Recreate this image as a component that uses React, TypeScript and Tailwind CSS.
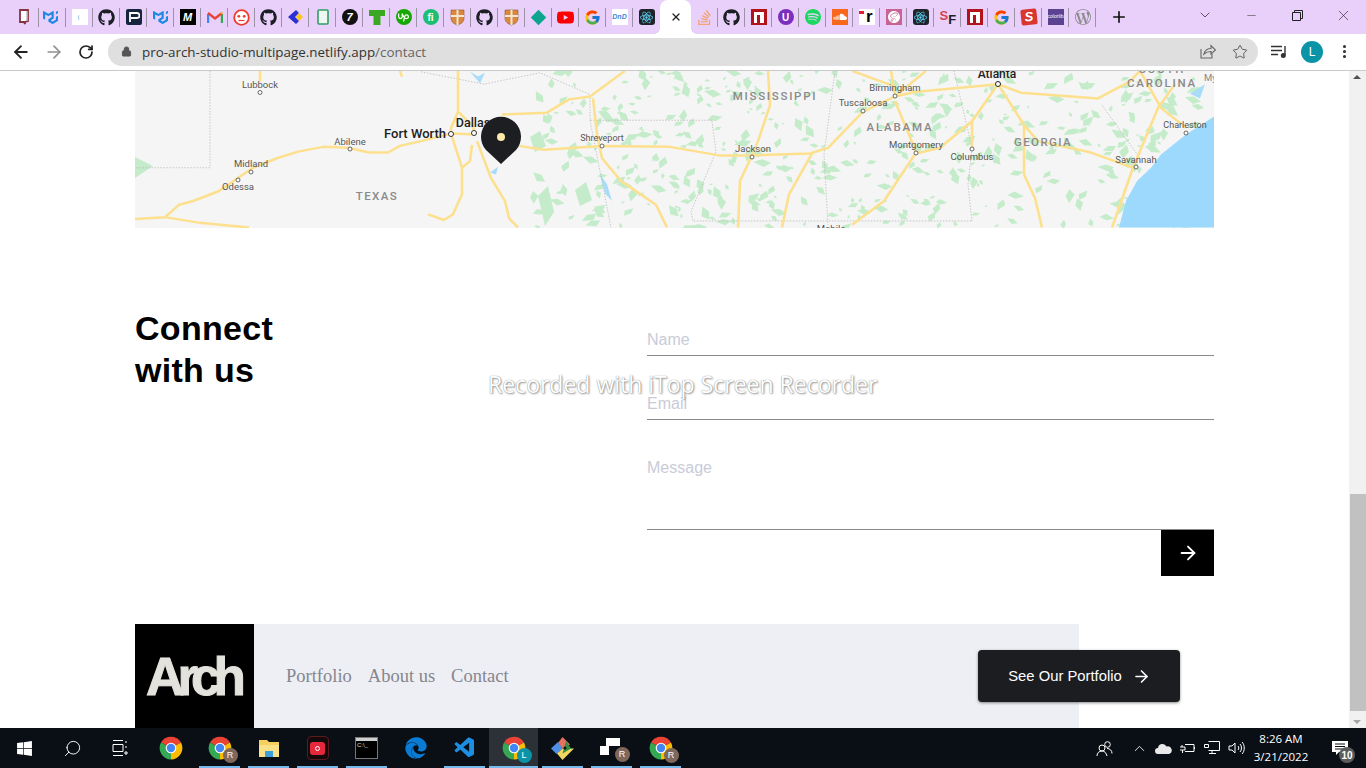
import type { ReactNode } from 'react';
import { ArrowLeft, ArrowRight, ChevronDown, ChevronUp, EllipsisVertical, Lock, Minus, Plus, RotateCw, Search, Star, X } from 'lucide-react';
import { FaEdge, FaGithub, FaWindows } from 'react-icons/fa';
import { FcGoogle } from 'react-icons/fc';
import { SiMui, SiReact, SiSass, SiSoundcloud, SiSpotify, SiStackoverflow, SiUpwork, SiWordpress, SiYoutube } from 'react-icons/si';
import { VscVscode } from 'react-icons/vsc';

const SANS = "font-['Liberation_Sans',Arial,sans-serif]";

const Github = () => <FaGithub className="text-[#1b1f23]" size={17} />;
const Mui = () => <SiMui className="text-[#1e88e5]" size={15} />;
const Google = () => <FcGoogle size={17} />;
const ReactDark = () => (
  <span className="flex h-4 w-4 items-center justify-center rounded-[3px] bg-[#20232a]">
    <SiReact className="text-[#61dafb]" size={13} />
  </span>
);
const Npm = () => (
  <span className="flex h-4 w-4 items-end justify-center bg-[#b3131b] pb-[2px]">
    <span className="flex h-[11px] w-[10px] justify-center bg-white">
      <span className="mt-[3px] h-2 w-[3px] bg-[#b3131b]" />
    </span>
  </span>
);
const Shield = () => (
  <svg width="15" height="17" viewBox="0 0 15 17">
    <path d="M1 1h13v8c0 4-3 6-6.500 7C4 15 1 13 1 9z" fill="#d9883d" stroke="#8d5a2b" strokeWidth="0.6" />
    <path d="M7.500 1v15M1 7h13" stroke="#f4e6d4" strokeWidth="2" />
  </svg>
);

const FAVICONS: ReactNode[] = [
  <svg key="a" className="-translate-x-[2px]" width="12" height="16" viewBox="0 0 12 16"><path d="M2 1h8v11l-3 1v2l-1-2H2z" fill="#fff" stroke="#84343f" strokeWidth="1.800" /><path d="M9 2v10" stroke="#b9b9c0" strokeWidth="1.500" /></svg>,
  <span key="b" className="flex -translate-x-[2px]"><Mui /></span>,
  <span key="c" className="flex h-4 w-4 items-center justify-center bg-white"><span className="h-[5px] w-[4px] rounded-full border-l border-[#9cc4e4]" /></span>,
  <Github key="d" />,
  <span key="e" className="flex h-4 w-4 items-center justify-center rounded-[2px] bg-[#14253d]">
    <svg width="12" height="12" viewBox="0 0 12 12"><path d="M2 11V2h7a2 2 0 0 1 0 5H3" fill="none" stroke="#fff" strokeWidth="1.800" /></svg>
  </span>,
  <Mui key="f" />,
  <span key="g" className={`flex h-4 w-4 items-center justify-center bg-black text-[11px] font-bold italic text-white ${SANS}`}>M</span>,
  <svg key="h" width="16" height="13" viewBox="0 0 16 13">
    <path d="M1 12V3" stroke="#4285f4" strokeWidth="2.400" />
    <path d="M15 12V3" stroke="#34a853" strokeWidth="2.400" />
    <path d="M1 2l7 5.500L15 2" fill="none" stroke="#ea4335" strokeWidth="2.400" />
    <path d="M14 1.500l1 1" stroke="#fbbc04" strokeWidth="2.400" />
  </svg>,
  <svg key="i" width="17" height="17" viewBox="0 0 17 17"><circle cx="8.500" cy="8.500" r="7.300" fill="#fff" stroke="#ee3b2f" strokeWidth="1.800" /><circle cx="5.800" cy="7.300" r="1.400" fill="#ee3b2f" /><circle cx="11.200" cy="7.300" r="1.400" fill="#ee3b2f" /><path d="M5.500 11.500h6" stroke="#ee3b2f" strokeWidth="1.200" /></svg>,
  <Github key="j" />,
  <svg key="k" width="17" height="16" viewBox="0 0 17 16"><path d="M9 1L1 8l8 7 3-3-4-4 4-4z" fill="#2b2fd6" /><path d="M12 4l4 4-4 4-3-4z" fill="#f6c71e" /></svg>,
  <svg key="l" width="12" height="16" viewBox="0 0 12 16"><rect x="1" y="1" width="10" height="14" rx="1" fill="#eef8f1" stroke="#2f9e62" strokeWidth="1.600" /></svg>,
  <span key="m" className={`flex h-4 w-4 items-center justify-center rounded-full bg-[#111] text-[11px] font-bold italic text-white ${SANS}`}>7</span>,
  <svg key="n" width="16" height="15" viewBox="0 0 16 15"><path d="M0 0h16v6h-4.500v9h-7V6H0z" fill="#3aa822" /></svg>,
  <span key="o" className="flex h-4 w-4 items-center justify-center rounded-full bg-[#14a800]"><SiUpwork className="text-white" size={11} /></span>,
  <span key="p" className={`flex h-4 w-4 items-center justify-center rounded-full bg-[#1dbf73] text-[10px] font-bold text-white ${SANS}`}>fi</span>,
  <Shield key="q" />,
  <Github key="r" />,
  <Shield key="s" />,
  <span key="t" className="h-[11px] w-[11px] rotate-45 bg-[#0ea58f]" />,
  <SiYoutube key="u" className="text-[#f00]" size={17} />,
  <Google key="v" />,
  <span key="w" className={`flex h-4 w-4 items-center justify-center bg-white text-[7px] font-bold italic text-[#3f86d6] ${SANS}`}>DnD</span>,
  <ReactDark key="x" />,
  null,
  <SiStackoverflow key="y" className="text-[#f2a47a]" size={15} />,
  <Github key="z" />,
  <Npm key="aa" />,
  <span key="ab" className={`flex h-4 w-4 items-center justify-center rounded-full bg-[#7b2fbf] text-[10px] font-bold text-white ${SANS}`}>U</span>,
  <SiSpotify key="ac" className="text-[#1ed760]" size={16} />,
  <span key="ad" className="flex h-4 w-4 items-center justify-center bg-[#f9671d]"><SiSoundcloud className="text-white" size={14} /></span>,
  <span key="ae" className={`relative flex h-4 w-4 justify-end bg-white pr-[2px] text-[17px] font-bold leading-[16px] text-black ${SANS}`}>r<span className="absolute left-0 top-[2px] h-[3px] w-[5px] bg-[#e2202c]" /></span>,
  <span key="af" className="flex h-4 w-4 items-center justify-center bg-[#c76494]"><SiSass className="text-white" size={12} /></span>,
  <ReactDark key="ag" />,
  <span key="ah" className={`flex h-4 w-4 items-start text-[13px] font-bold leading-[13px] ${SANS}`}><span className="text-[#d9404f]">S</span><span className="mt-[4px] text-[#222]">F</span></span>,
  <Npm key="ai" />,
  <Google key="aj" />,
  <span key="ak" className={`flex h-4 w-4 -rotate-6 items-center justify-center rounded-[2px] bg-[#d8362f] text-[13px] font-bold italic text-white ${SANS}`}>S</span>,
  <span key="al" className={`flex h-4 w-4 items-center justify-center bg-[#5c4391] text-[5px] text-white ${SANS}`}>colorlib</span>,
  <SiWordpress key="am" className="text-[#8d8d8d]" size={16} />,
];

function TabStrip() {
  return (
    <div className="flex h-[34px] shrink-0 items-center bg-[#e8d0fb] pl-[12px]">
      {FAVICONS.map((icon, i) =>
        icon === null ? (
          <div key={i} className="relative flex h-[34px] w-[31px] items-center justify-center rounded-t-[8px] bg-white">
            <X size={12} strokeWidth={2.5} className="text-[#222]" />
            <span className="absolute -left-[6px] bottom-0 h-[6px] w-[6px] bg-[radial-gradient(circle_at_0_0,#e8d0fb_6px,#fff_6px)]" />
            <span className="absolute -right-[6px] bottom-0 h-[6px] w-[6px] bg-[radial-gradient(circle_at_100%_0,#e8d0fb_6px,#fff_6px)]" />
          </div>
        ) : (
          <div key={i} className="relative flex h-[34px] w-[27px] items-center justify-center">
            {icon}
            {FAVICONS[i + 1] !== null && <span className="absolute right-0 top-[8px] h-[19px] w-px bg-[#9c93a6]" />}
          </div>
        ),
      )}
      <Plus size={18} strokeWidth={2.2} className="ml-[14px] text-[#111]" />
      <div className="ml-auto flex items-center text-[#333]">
        <div className="flex w-[46px] justify-center pb-1"><ChevronDown size={16} strokeWidth={1.2} /></div>
        <div className="flex w-[46px] justify-center pb-1"><Minus size={13} strokeWidth={1} /></div>
        <div className="flex w-[46px] justify-center pb-1">
          <svg width="11" height="11" viewBox="0 0 11 11" fill="none" stroke="#222"><path d="M.5 2.500h8v8h-8zM2.500 2.500v-2h8v8h-2" /></svg>
        </div>
        <div className="flex w-[46px] justify-center pb-1"><X size={17} strokeWidth={1} /></div>
      </div>
    </div>
  );
}

function Toolbar() {
  return (
    <div className="flex h-[37px] shrink-0 items-center border-b border-[#c9c9c9] bg-white pb-[1px]">
      <div className="flex w-[108px] shrink-0 items-center text-[#222]">
        <ArrowLeft size={20} strokeWidth={2.2} className="ml-[11px]" />
        <ArrowRight size={20} strokeWidth={2} className="ml-[13px] text-[#8f8f8f]" />
        <RotateCw size={16} strokeWidth={2.6} className="ml-[14px]" />
      </div>
      <div className="flex h-[28px] w-[1150px] items-center rounded-[14px] bg-[#dfdfdf] pl-[13px] pr-[10px]">
        <Lock size={11} fill="#555" strokeWidth={2} className="text-[#555]" />
        <span className="ml-[10px] pt-[1px] font-['Open_Sans',sans-serif] text-[13.4px] text-[#333]">
          pro-arch-studio-multipage.netlify.app<span className="text-[#666]">/contact</span>
        </span>
        <svg className="ml-auto" width="16" height="15" viewBox="0 0 16 15" fill="none" stroke="#666" strokeWidth="1.100">
          <path d="M1 5v9h11v-4" />
          <path d="M4 10c1-4 4-5.500 7-5.500V1.500l4.500 4.500L11 10V7.500C8 7.500 6 8 4 10z" />
        </svg>
        <Star size={16} strokeWidth={1.4} className="ml-[16px] text-[#555]" />
      </div>
      <svg className="ml-[13px]" width="16" height="13" viewBox="0 0 16 13" fill="none" stroke="#333" strokeWidth="1.400">
        <path d="M0 1.500h11M0 5.500h11M0 9.500h7" />
        <path d="M14 1v9" />
        <circle cx="12.300" cy="10.500" r="1.800" fill="#333" />
      </svg>
      <span className={`ml-[14px] flex h-[22px] w-[22px] items-center justify-center rounded-full bg-[#0b94a8] text-[12px] text-white ${SANS}`}>L</span>
      <EllipsisVertical size={17} strokeWidth={2.4} className="ml-[13px] text-[#333]" />
    </div>
  );
}

// the map is only a picture in the reference, so roads and land are drawn by hand in page coordinates
const ROADS = [
  'M135 227L165 225L179 212L193 208L218 198L253 173L277 163L298 156L323 151L348 152L369 157L388 157L400 150L421 145L451 137L476 138',
  'M165 225L200 231L249 236',
  'M260 71V82M400 71L402 77',
  'M458 71V114L451 131L451 137M458 114L472 128L476 138',
  'M451 137L462 173V201L453 222L444 228L428 222M472 149L470 166L462 173',
  'M477 145L491 184L505 208L509 226L518 236',
  'M519 150L544 154L602 150L670 151L719 160L752 160L810 158L828 152L863 114L895 98L916 93L958 89L998 85',
  'M502 117L547 115L569 101L590 98L625 71',
  'M593 100L597 138L602 163L621 187L656 212L667 236',
  'M768 71L770 107L758 145L752 160L740 187L738 236',
  'M812 158L789 201L782 236',
  'M895 98L891 71M895 98L926 71M852 71L891 86',
  'M895 103L909 138L916 157L884 208L852 233',
  'M916 158L940 152L972 124L998 85M972 124L972 152',
  'M998 85L1024 128L1038 145L1091 157L1133 173',
  'M1024 128V180L1035 205L1042 236',
  'M998 85L1021 94L1098 100L1130 82L1140 71',
  'M1175 85L1158 110L1133 173L1112 236',
  'M1140 71L1161 110L1186 131',
];

const BORDERS = [
  'M210 71V173H135',
  'M421 72L484 85L540 73L590 96V123H712M590 123L611 236',
  'M712 124L716 156L691 219L693 229H972',
  'M835 71L824 159L828 233',
  'M954 71L972 152L968 191L972 229',
  'M1102 107L1140 163',
];

const CITIES: [string, number, number, number, number, number][] = [
  // label, label x, baseline y, dot x, dot y, size
  ['Lubbock', 260, 88, 260, 92.500, 9.500],
  ['Abilene', 350, 145, 350, 149, 9.500],
  ['Midland', 251, 167, 251, 172, 9.500],
  ['Odessa', 238, 190, 238, 180, 9.500],
  ['Shreveport', 602, 141, 602, 146, 9],
  ['Jackson', 753, 152, 752, 157, 9.500],
  ['Tuscaloosa', 863, 106, 863, 111, 9.500],
  ['Birmingham', 895, 91, 895, 96, 9.500],
  ['Montgomery', 916, 148, 916, 153, 9.500],
  ['Columbus', 972, 160, 972, 149, 9.500],
  ['Charleston', 1185, 128, 1186, 133, 9],
  ['Savannah', 1136, 163, 1136, 167, 9.500],
];

const STATES: [string, number, number, number][] = [
  ['TEXAS', 377, 200, 1.400],
  ['MISSISSIPPI', 775, 100, 1.700],
  ['ALABAMA', 900, 131, 1.800],
  ['GEORGIA', 1043, 146, 1.400],
  ['CAROLINA', 1162, 87, 1.800],
  ['SOUTH', 1162, 73, 1.800],
];

// small repeatable generator so the forest patches land in the same place on every run
function buildPatches() {
  let seed = 41;
  const next = () => {
    seed = (seed * 1664525 + 1013904223) % 4294967296;
    return seed / 4294967296;
  };
  const out: string[] = [];
  for (let i = 0; i < 560; i++) {
    const x = 530 + next() * 670;
    const y = 71 + next() * 157;
    if (x > 1000 && x < 1100 && y > 165 && next() < 0.75) continue;
    if (x < 620 && next() < 0.4) continue;
    const s = 2 + next() * 7;
    const a = next() * 6.28;
    const pts = [0, 2.100, 3.500, 5].map((o, n) => {
      const r = n % 2 ? s : s * 0.55;
      return `${(x + Math.cos(a + o) * r).toFixed(1)},${(y + Math.sin(a + o) * r * 0.8).toFixed(1)}`;
    });
    out.push(pts.join(' '));
  }
  return out;
}
const PATCHES = buildPatches();

function MapImage() {
  return (
    <svg className="block h-[157px] w-full" viewBox="135 71 1079 157">
      <rect x="135" y="71" width="1079" height="157" fill="#f5f5f5" />
      {PATCHES.map(p => <polygon key={p} points={p} fill="#c4ecca" />)}
      <path d="M135 157L153 166L135 178z" fill="#c4ecca" />
      <path d="M530 137L540 131L546 146L535 152zM538 196L548 186L554 212L545 226zM575 190L586 182L592 200L580 206z" fill="#c4ecca" />
      {/* y coordinates for land were read off a crop that was slightly stretched */}
      <g transform="translate(0 3.400) scale(1 0.950)">
        <path d="M1214 119L1186 138L1161 159L1151 173L1137 187L1126 208L1119 236H1214z" fill="#9cd9fd" />
        <path d="M470 72L478 77L485 73L480 84zM600 180L607 190L612 208L605 200zM490 178L498 172L496 180zM1190 95L1205 85L1200 100z" fill="#a8dcf8" />
        {BORDERS.map(d => <path key={d} d={d} fill="none" stroke="#b8b8b8" strokeWidth="0.8" strokeDasharray="1.500 1.500" />)}
        {ROADS.map(d => <path key={d} d={d} fill="none" stroke="#fde08e" strokeWidth="2.600" strokeLinejoin="round" />)}
      </g>
      {STATES.map(([name, x, y, spacing]) => (
        <text key={name} x={x} y={y} textAnchor="middle" fontFamily="Roboto, sans-serif" fontSize="11.500" fontWeight="500" letterSpacing={spacing} fill="#8a8a8a">{name}</text>
      ))}
      {CITIES.map(([name, lx, ly, dx, dy, size]) => (
        <g key={name}>
          <text x={lx} y={ly} textAnchor="middle" fontFamily="Roboto, sans-serif" fontSize={size} fill="#555">{name}</text>
          <circle cx={dx} cy={dy} r="2" fill="#fff" stroke="#444" strokeWidth="0.800" />
        </g>
      ))}
      <text x="415" y="138" textAnchor="middle" fontFamily="Roboto, sans-serif" fontSize="13" fontWeight="500" fill="#222">Fort Worth</text>
      <text x="473" y="127" textAnchor="middle" fontFamily="Roboto, sans-serif" fontSize="12.500" fontWeight="500" fill="#222">Dallas</text>
      <text x="997" y="78" textAnchor="middle" fontFamily="Roboto, sans-serif" fontSize="12" fontWeight="500" fill="#222">Atlanta</text>
      <text x="831" y="232" textAnchor="middle" fontFamily="Roboto, sans-serif" fontSize="9.500" fill="#555">Mobile</text>
      <text x="1204" y="81" fontFamily="Roboto, sans-serif" fontSize="9.500" fill="#888">My</text>
      <circle cx="451" cy="134" r="2.500" fill="#fff" stroke="#333" />
      <circle cx="474" cy="133" r="2.500" fill="#fff" stroke="#333" />
      <circle cx="998" cy="84" r="2.500" fill="#fff" stroke="#222" />
      <path d="M501 164L486 150A20 20 0 1 1 516 150z" fill="#1d1e22" />
      <circle cx="501" cy="137" r="4" fill="#fde9a8" />
    </svg>
  );
}

function ContactForm() {
  return (
    <div className="flex items-start justify-between pt-[64px]">
      <h2 className={`mt-[15px] text-[34px] font-bold leading-[42px] tracking-[0.3px] text-black ${SANS}`}>
        Connect<br />with us
      </h2>
      <form className={`w-[567px] ${SANS}`}>
        <div className="flex h-[64px] items-end border-b border-[#8a8a8a] pb-[5px]">
          <input placeholder="Name" className="h-5 w-full text-base leading-5 outline-none placeholder:text-[#c9cbd8]" />
        </div>
        <div className="flex h-[64px] items-end border-b border-[#8a8a8a] pb-[5px]">
          <input placeholder="Email" className="h-5 w-full text-base leading-5 outline-none placeholder:text-[#c9cbd8]" />
        </div>
        <div className="h-[110px] border-b border-[#8a8a8a] pt-[38px]">
          <textarea placeholder="Message" className="block h-[60px] w-full resize-none text-base leading-5 outline-none placeholder:text-[#c9cbd8]" />
        </div>
        <button type="button" className="ml-auto flex h-[46px] w-[53px] items-center justify-center bg-black">
          <ArrowRight size={22} strokeWidth={2} className="text-white" />
        </button>
      </form>
    </div>
  );
}

function Footer() {
  return (
    <footer className="mr-[135px] mt-[48px] flex h-[104px] items-center bg-[#eeeff4]">
      <div className="flex h-full w-[119px] shrink-0 items-center justify-center bg-black pr-[4px]">
        <span className={`text-[53px] font-bold leading-none tracking-[-7px] text-[#e3e2dc] [-webkit-text-stroke:1px_#e3e2dc] ${SANS}`}>Arch</span>
      </div>
      <nav className="ml-[32px] flex gap-4 pt-[1px] font-['Liberation_Serif',serif] text-[18.500px] text-[#85868f]">
        <a>Portfolio</a>
        <a>About us</a>
        <a>Contact</a>
      </nav>
      <button type="button" className={`-mr-[101px] ml-auto flex h-[52px] w-[202px] items-center justify-center gap-[10px] rounded-[4px] bg-[#1c1d21] pl-[1px] text-[14.800px] text-white shadow-[0_1px_3px_rgba(0,0,0,0.45)] ${SANS}`}>
        See Our Portfolio
        <ArrowRight size={19} strokeWidth={2} />
      </button>
    </footer>
  );
}

function Scrollbar() {
  return (
    <div className="relative w-[17px] shrink-0 bg-[#f1f1f1]">
      <span className="absolute left-[4px] top-[4px] h-0 w-0 border-x-[4px] border-b-[4px] border-x-transparent border-b-[#505050]" />
      <div className="absolute left-[1px] right-0 top-[423px] h-[217px] bg-[#c1c1c1]" />
      <span className="absolute bottom-[4px] left-[4px] h-0 w-0 border-x-[4px] border-t-[4px] border-x-transparent border-t-[#a3a3a3]" />
    </div>
  );
}

function Chrome({ size = 24 }: { size?: number }) {
  return (
    <svg width={size} height={size} viewBox="0 0 24 24">
      <path d="M12 12L2 6.500A11.500 11.500 0 0 1 22 6.500z" fill="#ea4335" />
      <path d="M12 12L22 6.500A11.500 11.500 0 0 1 12 23.500z" fill="#fbbc04" />
      <path d="M12 12L12 23.500A11.500 11.500 0 0 1 2 6.500z" fill="#34a853" />
      <circle cx="12" cy="12" r="5.300" fill="#fff" />
      <circle cx="12" cy="12" r="4.200" fill="#4285f4" />
    </svg>
  );
}

function Badge({ letter, color }: { letter: string; color: string }) {
  return (
    <span className={`absolute -bottom-[3px] -right-[6px] flex h-[15px] w-[15px] items-center justify-center rounded-full text-[9px] text-white ${color} ${SANS}`}>
      {letter}
    </span>
  );
}

const TASK_ITEMS: { icon: ReactNode; running?: boolean; active?: boolean }[] = [
  { icon: <Chrome /> },
  { icon: <span className="relative flex"><Chrome /><Badge letter="R" color="bg-[#7f675c]" /></span>, running: true },
  {
    icon: (
      <svg width="22" height="22" viewBox="0 0 22 22">
        <path d="M1 3h8l2 2h10v15H1z" fill="#f6cf5f" />
        <path d="M1 8h20v12H1z" fill="#fbe08a" />
        <path d="M7 14h8v6H7z" fill="#3aa0dc" />
      </svg>
    ),
    running: true,
  },
  {
    icon: (
      <span className="flex h-[24px] w-[22px] items-center justify-center rounded-[4px] border border-[#5a1a1f] bg-[#16090b]">
        <span className="flex h-[13px] w-[15px] items-center justify-center rounded-[3px] bg-[#e5283c]"><span className="h-[5px] w-[5px] rounded-full border border-white" /></span>
      </span>
    ),
    running: true,
  },
  {
    icon: (
      <span className={`flex h-[22px] w-[23px] flex-col border border-[#777] bg-black ${SANS}`}>
        <span className="h-[3px] bg-[#cfcfcf]" />
        <span className="pl-[1px] text-[6px] leading-[9px] text-[#ddd]">C:\_</span>
      </span>
    ),
    running: true,
  },
  { icon: <FaEdge className="text-[#0a7cd6]" size={22} /> },
  { icon: <VscVscode className="text-[#1c8fe3]" size={24} />, running: true },
  { icon: <span className="relative flex"><Chrome /><Badge letter="L" color="bg-[#0b94a8]" /></span>, running: true, active: true },
  {
    icon: (
      <svg width="25" height="25" viewBox="0 0 25 25">
        <path d="M12.500 1L20 8.500 12.500 12.500 8 7z" fill="#e8705f" />
        <path d="M1 12.500L8 6l4.500 6.500L6.500 18z" fill="#4f8fe6" />
        <path d="M12.500 12.500L24 12.500 12.500 24 7 17.500z" fill="#f0d860" />
        <path d="M16 5l5 7.500-8.500 5" fill="#2f8f45" />
        <circle cx="15" cy="12" r="1.500" fill="#111" />
      </svg>
    ),
    running: true,
  },
  {
    icon: (
      <span className="relative flex h-[22px] w-[24px] items-start">
        <span className="absolute left-0 top-[9px] h-[9px] w-[9px] bg-white" />
        <span className="absolute left-[6px] top-[1px] h-[8px] w-[14px] bg-white" />
        <Badge letter="R" color="bg-[#7f675c]" />
      </span>
    ),
    running: true,
  },
  { icon: <span className="relative flex"><Chrome /><Badge letter="R" color="bg-[#7f675c]" /></span>, running: true },
];

function Taskbar() {
  return (
    <div className="relative flex h-10 shrink-0 items-center bg-[#0a0f16] text-white">
      <div className="flex w-12 justify-center"><FaWindows size={17} /></div>
      <div className="flex w-12 justify-center"><Search size={19} strokeWidth={1.2} className="-scale-x-100" /></div>
      <div className="flex w-12 justify-center">
        <svg width="16" height="16" viewBox="0 0 16 16" fill="none" stroke="#fff" strokeWidth="1">
          <path d="M1 .500h10M1 15.500h10M1 4.500h10v7H1zM14 1v2M14 6v2" />
          <path d="M13 12h2v2h-2z" />
        </svg>
      </div>
      <div className="ml-[2px] flex h-full">
        {TASK_ITEMS.map((item, i) => (
          <div key={i} className={`relative flex h-full w-[49px] items-center justify-center ${item.active ? 'bg-[#2b3137]' : ''}`}>
            {item.icon}
            {item.running && <span className={`absolute bottom-0 h-[2px] bg-[#76b9ed] ${item.active ? 'inset-x-0' : 'inset-x-[4px]'}`} />}
          </div>
        ))}
      </div>
      <div className="absolute right-0 top-0 flex h-10 items-center">
        <svg className="mr-[18px]" width="17" height="17" viewBox="0 0 17 17" fill="none" stroke="#fff" strokeWidth="1">
          <circle cx="6" cy="8" r="3" />
          <circle cx="11.500" cy="4.500" r="2.800" />
          <path d="M1 16c0-3 2-5 5-5s4 2 5 5M11 8.500c3 0 5 2 5 5" />
        </svg>
        <ChevronUp size={17} strokeWidth={1.2} />
        <svg className="ml-[7px]" width="17" height="11" viewBox="0 0 17 11"><path d="M3 11a3 3 0 0 1 0-6 4.500 4.500 0 0 1 8.500-1.500A3.500 3.500 0 0 1 14 11z" fill="#e9e9e9" /></svg>
        <svg className="ml-[7px]" width="17" height="12" viewBox="0 0 17 12" fill="none" stroke="#fff"><path d="M6 2.500h9v7H6M3 3v2M1 5h5v3H1M3.500 8v3" /><path d="M15.500 5v2" /></svg>
        <svg className="ml-[8px]" width="16" height="14" viewBox="0 0 16 14" fill="none" stroke="#fff"><path d="M4.500 .500h11v9h-11M8 9.500v3M5 12.500h7M.500 3.500h4v3h-4z" /></svg>
        <svg className="ml-[8px]" width="17" height="14" viewBox="0 0 17 14" fill="none" stroke="#fff"><path d="M1 5h3l3-3v10l-3-3H1z" /><path d="M10 5c1 1 1 3 0 4M12 3c2 2 2 6 0 8M14 1c3 3 3 9 0 12" /></svg>
        <div className="ml-[5px] w-[62px] text-center font-['Open_Sans',sans-serif] text-[11.500px] leading-[18px]">
          <div>8:26 AM</div>
          <div>3/21/2022</div>
        </div>
        <div className="relative ml-[20px] mr-[18px] h-[16px] w-[16px]">
          <svg width="16" height="16" viewBox="0 0 16 16"><path d="M0 1h16v11H7l-3 3v-3H0z" fill="#fff" /><path d="M3 4h10M3 6.500h10M3 9h10" stroke="#0a0f16" /></svg>
          <span className={`absolute -bottom-[7px] -right-[7px] flex h-[16px] w-[16px] items-center justify-center rounded-full bg-[#5c5c5c] text-[10px] font-bold text-white ${SANS}`}>10</span>
        </div>
      </div>
    </div>
  );
}

export default function App() {
  return (
    <div className="flex h-screen w-[1366px] flex-col overflow-hidden bg-white">
      <TabStrip />
      <Toolbar />
      <div className="flex min-h-0 flex-1">
        <main className="relative min-w-0 flex-1 overflow-hidden pl-[135px] pr-[135px]">
          <MapImage />
          <ContactForm />
          <Footer />
          <span className="absolute left-[488px] top-[296px] whitespace-nowrap font-['Open_Sans',sans-serif] text-[23px] text-white [text-shadow:0_0_1px_#777,1px_1px_2px_#999]">
            Recorded with iTop Screen Recorder
          </span>
        </main>
        <Scrollbar />
      </div>
      <Taskbar />
    </div>
  );
}
